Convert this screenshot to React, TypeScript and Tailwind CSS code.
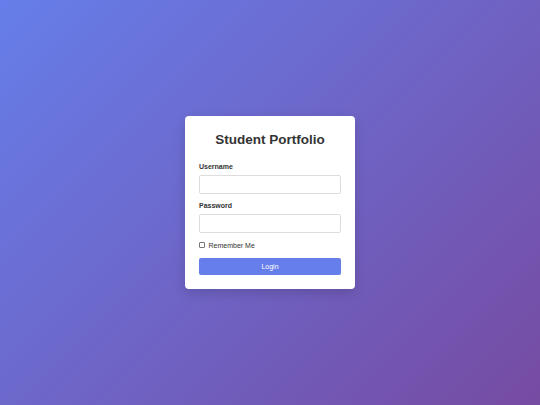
import React from 'react';

const App = () => {
  return (
    <div className="min-h-screen w-full flex items-center justify-center bg-[linear-gradient(135deg,#667eea_0%,#764ba2_100%)] font-['Liberation_Sans',Arial,sans-serif]">
      {/* Login card */}
      <div className="w-[170px] bg-white rounded-[4px] shadow-[0_4px_12px_rgba(0,0,0,0.15)] px-[14px] pt-[16px] pb-[14px]">
        <h1 className="text-center text-[13.5px] leading-[16px] font-bold text-[#333]">
          Student Portfolio
        </h1>

        <form className="mt-[14px]" onSubmit={(e) => e.preventDefault()}>
          <div className="mb-[7.5px]">
            <label className="block text-[7px] leading-[9px] font-bold text-[#333] mb-[4px]">
              Username
            </label>
            <input
              type="text"
              className="block w-full h-[18.5px] border border-[#ddd] rounded-[2px] bg-white outline-none"
            />
          </div>

          <div className="mb-[8px]">
            <label className="block text-[7px] leading-[9px] font-bold text-[#333] mb-[4px]">
              Password
            </label>
            <input
              type="password"
              className="block w-full h-[18.5px] border border-[#ddd] rounded-[2px] bg-white outline-none"
            />
          </div>

          <div className="flex items-center gap-[4px] h-[9px] mb-[8px]">
            <span className="w-[5.5px] h-[5.5px] border border-[#767676] rounded-[1px] bg-white" />
            <span className="text-[7px] leading-[9px] text-[#333]">Remember Me</span>
          </div>

          <button
            type="submit"
            className="block w-full h-[17.5px] rounded-[2px] bg-[#667eea] text-white text-[7px] leading-[9px]"
          >
            Login
          </button>
        </form>
      </div>
    </div>
  );
};

export default App;
